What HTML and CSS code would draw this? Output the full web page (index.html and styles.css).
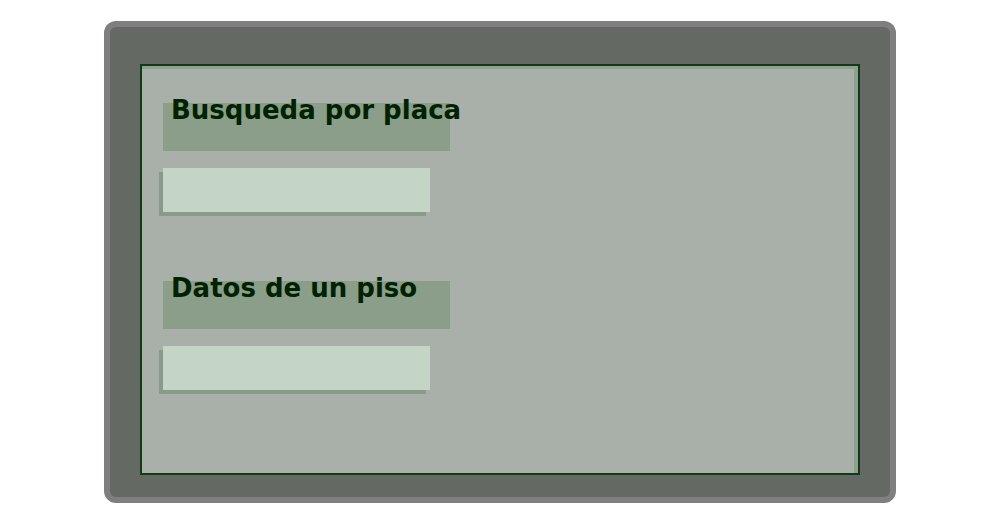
FILE: index.html
```html
<!DOCTYPE html>
<html lang="es">
<head>
  <meta charset="UTF-8">
  <title>Busqueda</title>
  <link rel="stylesheet" href="styles.css">
</head>
<body>
  <div class="frame">
    <div class="panel">
      <div class="group">
        <div class="caption"><span>Busqueda por placa</span></div>
        <input type="text" class="field">
      </div>
      <div class="group">
        <div class="caption"><span>Datos de un piso</span></div>
        <input type="text" class="field">
      </div>
    </div>
  </div>
</body>
</html>
```

FILE: styles.css
```css
/* Page */
body {
  margin: 0;
  background-color: #ffffff;
  font-family: "DejaVu Sans", Verdana, sans-serif;
}

/* Outer grey frame */
.frame {
  width: 720px;
  margin: 21px auto 0;
  padding: 37px 30px 22px;
  background-color: #646964;
  border: 6px solid #7f7f7f;
  border-radius: 12px;
}

/* Inner panel */
.panel {
  height: 411px;
  padding: 37px 21px 0;
  background-color: #a9afa9;
  border: 2px solid #103a18;
  box-shadow: inset -4px 3px 0 #8fa08f;
  box-sizing: border-box;
}

.group {
  margin-bottom: 69px;
}

/* Section heading */
.caption {
  display: flow-root;
  width: 287px;
  height: 48px;
  background-color: #8a9e8a;
  padding-left: 8px;
  box-sizing: border-box;
  white-space: nowrap;
}

.caption span {
  display: block;
  margin-top: -8px;
  font-size: 26px;
  font-weight: bold;
  line-height: 30px;
  color: #002200;
}

/* Input fields */
.field {
  display: block;
  width: 267px;
  height: 44px;
  margin-top: 17px;
  padding: 0;
  border: none;
  background-color: #c5d5c5;
  box-shadow: -4px 4px 0 #8a9a8a;
  box-sizing: border-box;
}
```
